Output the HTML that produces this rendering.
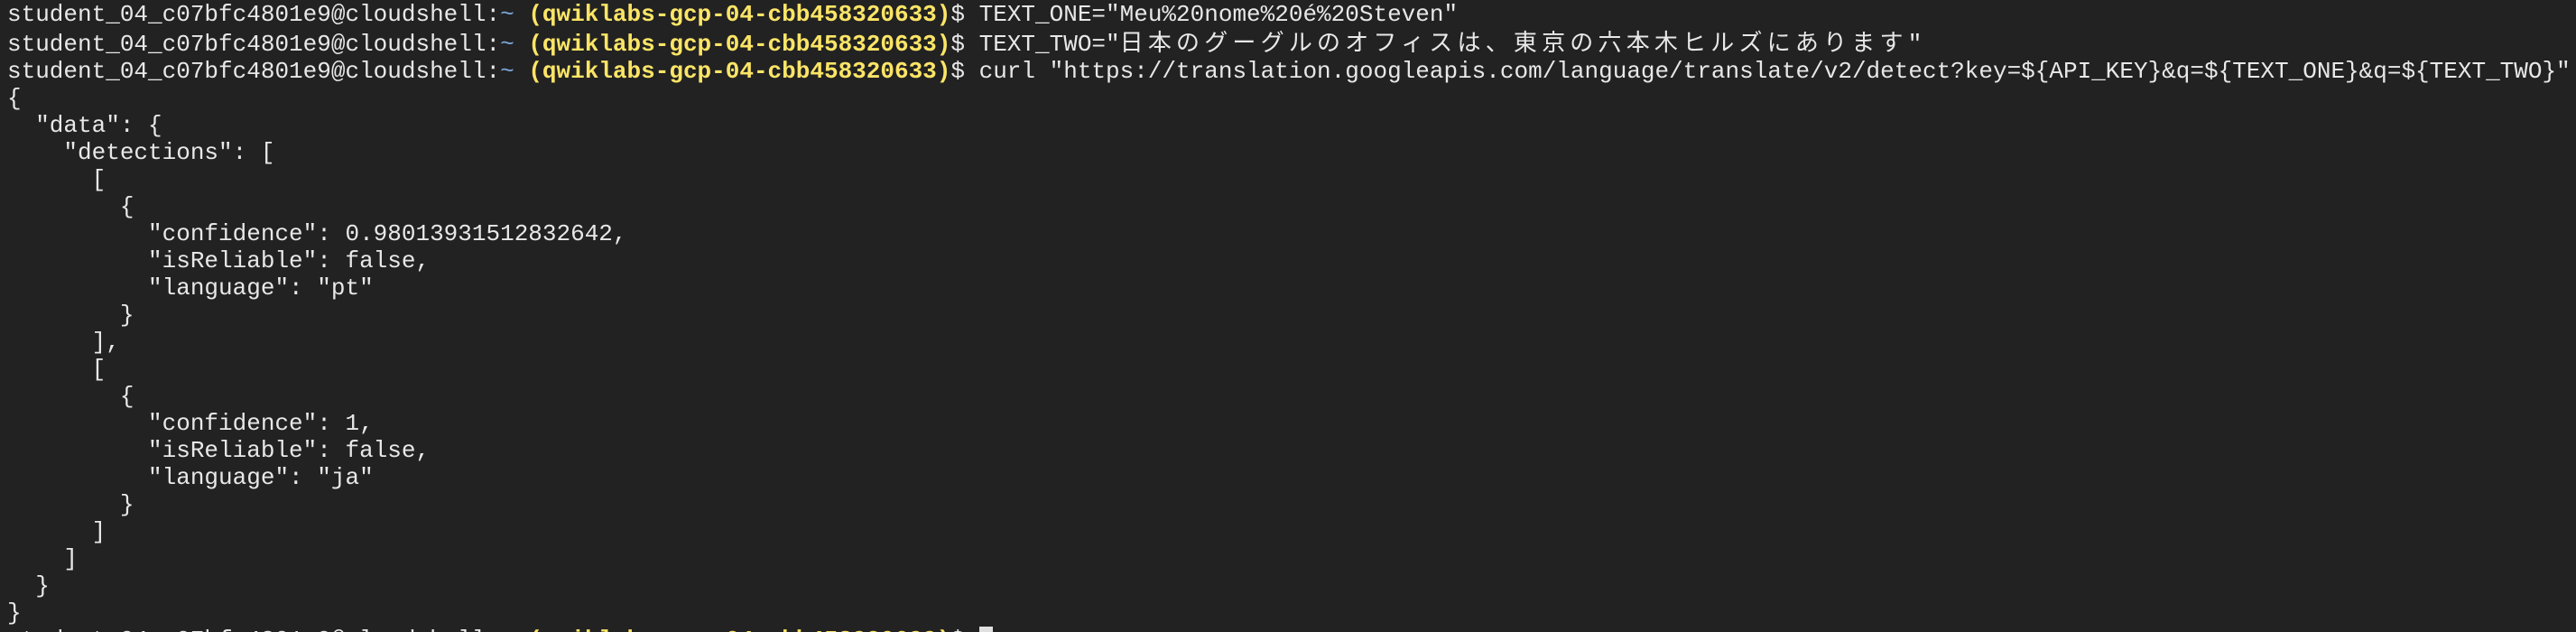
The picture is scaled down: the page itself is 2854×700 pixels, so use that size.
<!DOCTYPE html>
<html><head><meta charset="utf-8"><style>
html,body{margin:0;padding:0;background:#222222;width:2854px;height:700px;overflow:hidden}
#w{position:relative;width:2854px;height:700px;overflow:hidden;background:#222222}
pre{position:absolute;left:8px;top:-29px;margin:0;font-family:"Liberation Mono","Noto Sans CJK JP",monospace;font-size:26px;line-height:30px;color:#e8e8e8;white-space:pre}
.y{color:#fce566;font-weight:bold}
.b{color:#7aa6da}
.j{letter-spacing:5.2px;font-family:"Noto Sans CJK JP",sans-serif}
.c{background:#e0e0e0;color:#222}
</style></head><body><div id="w"><pre>student_04_c07bfc4801e9@cloudshell:<span class="b">~</span> <span class="y">(qwiklabs-gcp-04-cbb458320633)</span>$ export API_KEY
student_04_c07bfc4801e9@cloudshell:<span class="b">~</span> <span class="y">(qwiklabs-gcp-04-cbb458320633)</span>$ TEXT_ONE="Meu%20nome%20é%20Steven"
student_04_c07bfc4801e9@cloudshell:<span class="b">~</span> <span class="y">(qwiklabs-gcp-04-cbb458320633)</span>$ TEXT_TWO="<span class="j">日本のグーグルのオフィスは、東京の六本木ヒルズにあります</span>"
student_04_c07bfc4801e9@cloudshell:<span class="b">~</span> <span class="y">(qwiklabs-gcp-04-cbb458320633)</span>$ curl "https://translation.googleapis.com/language/translate/v2/detect?key=${API_KEY}&amp;q=${TEXT_ONE}&amp;q=${TEXT_TWO}"
{
  "data": {
    "detections": [
      [
        {
          "confidence": 0.98013931512832642,
          "isReliable": false,
          "language": "pt"
        }
      ],
      [
        {
          "confidence": 1,
          "isReliable": false,
          "language": "ja"
        }
      ]
    ]
  }
}
student_04_c07bfc4801e9@cloudshell:<span class="b">~</span> <span class="y">(qwiklabs-gcp-04-cbb458320633)</span>$ <span class="c"> </span>
</pre></div></body></html>
